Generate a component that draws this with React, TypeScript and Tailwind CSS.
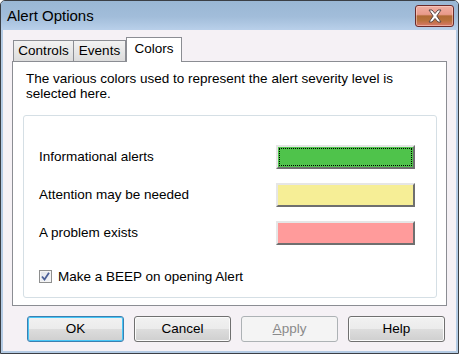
import { useState } from "react"

const tabs = ["Controls", "Events", "Colors"]

const severities = [
  { label: "Informational alerts", color: "bg-[#4fc34b]", focused: true },
  { label: "Attention may be needed", color: "bg-[#f6ee96]", focused: false },
  { label: "A problem exists", color: "bg-[#ff9b9b]", focused: false },
]

function CloseButton() {
  return (
    <div className="mt-[4px] mr-[4px] flex h-[22px] w-[39px] items-center justify-center rounded-[3px] border border-[#6b2a2a] bg-[linear-gradient(to_bottom,#f0aea2_0%,#e99a8b_42%,#b06a36_50%,#b8703c_72%,#d9786a_100%)] shadow-[inset_0_0_0_1px_rgba(255,220,210,0.5)]">
      <svg width="16" height="14" viewBox="0 0 16 14">
        <path
          d="M2 1 L5 1 L8 4.5 L11 1 L14 1 L9.8 7 L14 13 L11 13 L8 9.5 L5 13 L2 13 L6.2 7 Z"
          fill="#ffffff"
          stroke="#5a4848"
          strokeWidth="1"
          strokeLinejoin="round"
        />
      </svg>
    </div>
  )
}

function DialogButton({ label, primary, disabled }: { label: string; primary?: boolean; disabled?: boolean }) {
  if (disabled) {
    return (
      <div className="flex h-[26px] w-[97px] items-center justify-center rounded-[3px] border border-[#adb2b5] bg-[#f4f4f4] text-[#8a8a8a]">
        <span>
          <span className="underline">{label[0]}</span>
          {label.slice(1)}
        </span>
      </div>
    )
  }
  return (
    <div
      className={
        primary
          ? "flex h-[26px] w-[97px] items-center justify-center rounded-[3px] border border-[#3c7fb1] bg-[linear-gradient(to_bottom,#f2f2f2_0%,#ebebeb_50%,#dddddd_50%,#cfcfcf_100%)] shadow-[inset_0_0_0_1px_#48c6f6]"
          : "flex h-[26px] w-[97px] items-center justify-center rounded-[3px] border border-[#707070] bg-[linear-gradient(to_bottom,#f2f2f2_0%,#ebebeb_50%,#dddddd_50%,#cfcfcf_100%)] shadow-[inset_0_0_0_1px_#fbfbfb]"
      }
    >
      {label}
    </div>
  )
}

export default function App() {
  const [beep, setBeep] = useState(true)

  return (
    <div className="flex h-[354px] w-[459px] flex-col overflow-hidden rounded-t-[5px] border border-[#3b3f45] bg-[#b4cbe4] font-['Liberation_Sans',Arial,sans-serif] text-[13.5px] text-black">
      {/* Title bar */}
      <div className="flex h-[29px] shrink-0 items-start justify-between bg-[linear-gradient(to_bottom,#9ab7d4_0%,#a2bdda_55%,#b9d0ea_100%)] pl-[6px]">
        <span className="mt-[6px] text-[15px] leading-[18px]">Alert Options</span>
        <CloseButton />
      </div>

      {/* Client area */}
      <div className="mx-[2px] mb-[2px] flex flex-1 flex-col bg-[#f5f1f5] px-[9px] pt-[7px]">
        {/* Tabs */}
        <div className="relative z-10 flex h-[24px] items-end pl-[1px]">
          {tabs.map((tab) =>
            tab === "Colors" ? (
              <div
                key={tab}
                className="-mb-px flex h-[25px] w-[56px] items-start justify-center border border-b-0 border-[#8b8d93] bg-white pt-[3px] leading-[16px]"
              >
                {tab}
              </div>
            ) : (
              <div
                key={tab}
                className={
                  tab === "Controls"
                    ? "flex h-[21px] w-[61px] items-start justify-center border border-b-0 border-[#8b8d93] bg-[linear-gradient(to_bottom,#f2f2f2,#dcdcdc)] pt-[2px] leading-[16px]"
                    : "-ml-px flex h-[21px] w-[53px] items-start justify-center border border-b-0 border-[#8b8d93] bg-[linear-gradient(to_bottom,#f2f2f2,#dcdcdc)] pt-[2px] leading-[16px]"
                }
              >
                {tab}
              </div>
            )
          )}
        </div>

        {/* Tab panel */}
        <div className="flex h-[245px] flex-col border border-[#8b8d93] bg-white px-[13px] pt-[9px]">
          <p className="leading-[15px]">
            The various colors used to represent the alert severity level is
            <br />
            selected here.
          </p>

          <div className="mt-[14px] mr-[-4px] ml-[-3px] flex h-[183px] flex-col rounded-[3px] border border-[#d5dfe5] pt-[29px] pr-[21px] pl-[15px]">
            <div className="flex flex-col gap-[14px]">
              {severities.map((s) => (
                <div key={s.label} className="flex h-[24px] items-center justify-between">
                  <span>{s.label}</span>
                  <div
                    className={`h-[24px] w-[139px] border-2 border-t-[#e6e6e6] border-r-[#6f6f6f] border-b-[#6f6f6f] border-l-[#e6e6e6] p-[1px] ${s.color}`}
                  >
                    {s.focused && <div className="h-full w-full border border-dotted border-black" />}
                  </div>
                </div>
              ))}
            </div>

            <label className="mt-[24px] flex items-center gap-[6px]" onClick={() => setBeep(!beep)}>
              <span className="flex h-[13px] w-[13px] items-center justify-center border border-[#8e8f8f] bg-[linear-gradient(135deg,#dfe3ea,#f6f7f9)] shadow-[inset_0_0_0_1px_#f4f4f4]">
                {beep && (
                  <svg width="9" height="9" viewBox="0 0 9 9">
                    <path d="M1 4.5 L3.5 7.5 L8 0.8" fill="none" stroke="#4a5f97" strokeWidth="1.8" />
                  </svg>
                )}
              </span>
              <span className="leading-[15px]">Make a BEEP on opening Alert</span>
            </label>
          </div>
        </div>

        {/* Buttons */}
        <div className="mt-[10px] flex gap-[10px] pl-[15px]">
          <DialogButton label="OK" primary />
          <DialogButton label="Cancel" />
          <DialogButton label="Apply" disabled />
          <DialogButton label="Help" />
        </div>
      </div>
    </div>
  )
}
